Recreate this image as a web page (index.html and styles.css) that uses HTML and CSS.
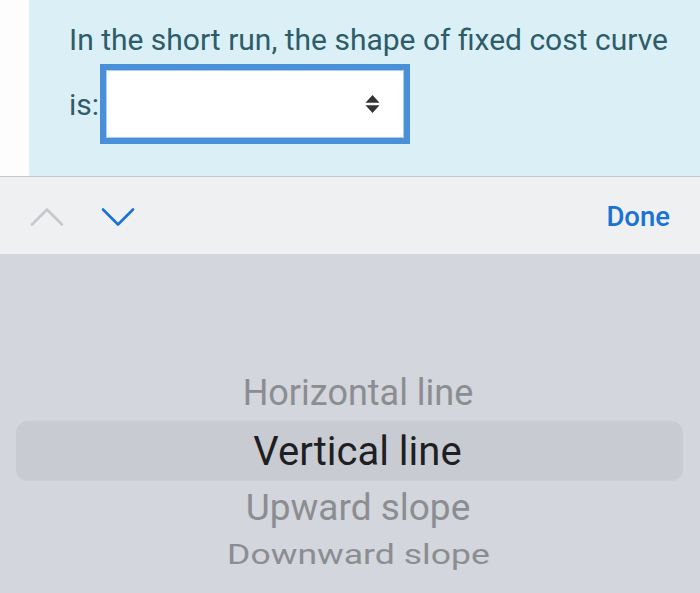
FILE: index.html
```html
<!DOCTYPE html>
<html>
<head>
<meta charset="utf-8">
<link rel="stylesheet" href="styles.css">
</head>
<body>
<div class="page">
  <div class="gutter"></div>
  <div class="panel">
    <p class="question">In the short run, the shape of fixed cost curve</p>
    <div class="answer">
      <span class="label">is:</span>
      <div class="select">
        <svg class="updown" width="15" height="20" viewBox="0 0 15 20"><path d="M7.5 1 L14.5 8.7 H0.5 Z M7.5 19 L14.5 11.3 H0.5 Z" fill="#333"/></svg>
      </div>
    </div>
  </div>
</div>
<div class="toolbar">
  <div class="navs">
    <svg class="chev" width="34" height="20" viewBox="0 0 34 20"><path d="M2 17.5 L17 2.5 L32 17.5" fill="none" stroke="#c6c8cc" stroke-width="2.6" stroke-linecap="round" stroke-linejoin="round"/></svg>
    <svg class="chev" width="34" height="20" viewBox="0 0 34 20"><path d="M2 2.5 L17 17.5 L32 2.5" fill="none" stroke="#1a72d4" stroke-width="2.6" stroke-linecap="round" stroke-linejoin="round"/></svg>
  </div>
  <span class="done">Done</span>
</div>
<div class="picker">
  <div class="opt o1">Horizontal line</div>
  <div class="opt sel">Vertical line</div>
  <div class="opt o3">Upward slope</div>
  <div class="opt o4"><span class="wide">Downward slope</span></div>
</div>
</body>
</html>
```
FILE: styles.css
```css
html, body {
  margin: 0;
  padding: 0;
}
body {
  width: 700px;
  height: 593px;
  overflow: hidden;
  background: #d3d6dc;
  font-family: "Roboto", "Liberation Sans", sans-serif;
}
.page {
  display: flex;
  height: 176px;
  background: #ffffff;
}
.gutter {
  width: 29px;
  background: #fdfdfd;
}
.panel {
  flex: 1;
  background: #dbf0f6;
  padding: 21px 0 0 40px;
}
.question {
  margin: 0;
  font-size: 30px;
  line-height: 38px;
  color: #2e5c69;
}
.answer {
  display: flex;
  align-items: center;
  margin-top: 5px;
}
.label {
  width: 31px;
  font-size: 30px;
  color: #2e5c69;
}
.select {
  box-sizing: border-box;
  width: 310px;
  height: 80px;
  border: 6px solid #4a90d9;
  box-shadow: inset 0 0 0 1px #a6d0f2;
  background: #fff;
  display: flex;
  align-items: center;
  justify-content: flex-end;
  padding-right: 24px;
}
.toolbar {
  height: 77px;
  border-top: 1px solid #c3c6cb;
  background: #eff0f2;
  display: flex;
  align-items: center;
  justify-content: space-between;
  padding: 0 30px 0 30px;
}
.navs {
  display: flex;
  gap: 37px;
  align-items: center;
  padding-top: 2px;
}
.done {
  color: #1a72d4;
  font-size: 27.5px;
  font-weight: 500;
  padding-top: 2px;
}
.picker {
  display: flex;
  flex-direction: column;
  padding-top: 111px;
}
.opt {
  display: flex;
  align-items: center;
  justify-content: center;
  color: #8c8d91;
  padding-left: 16px;
}
.o1 {
  height: 56px;
  font-size: 36px;
}
.sel {
  height: 60px;
  margin: 0 17px 0 16px;
  border-radius: 12px;
  background: #c9cbd2;
  color: #1e1f22;
  font-size: 40px;
}
.o3 {
  height: 53px;
  font-size: 37px;
}
.o4 {
  height: 40px;
  font-size: 28px;
}
.wide {
  display: inline-block;
  transform: scaleX(1.27);
}
```
